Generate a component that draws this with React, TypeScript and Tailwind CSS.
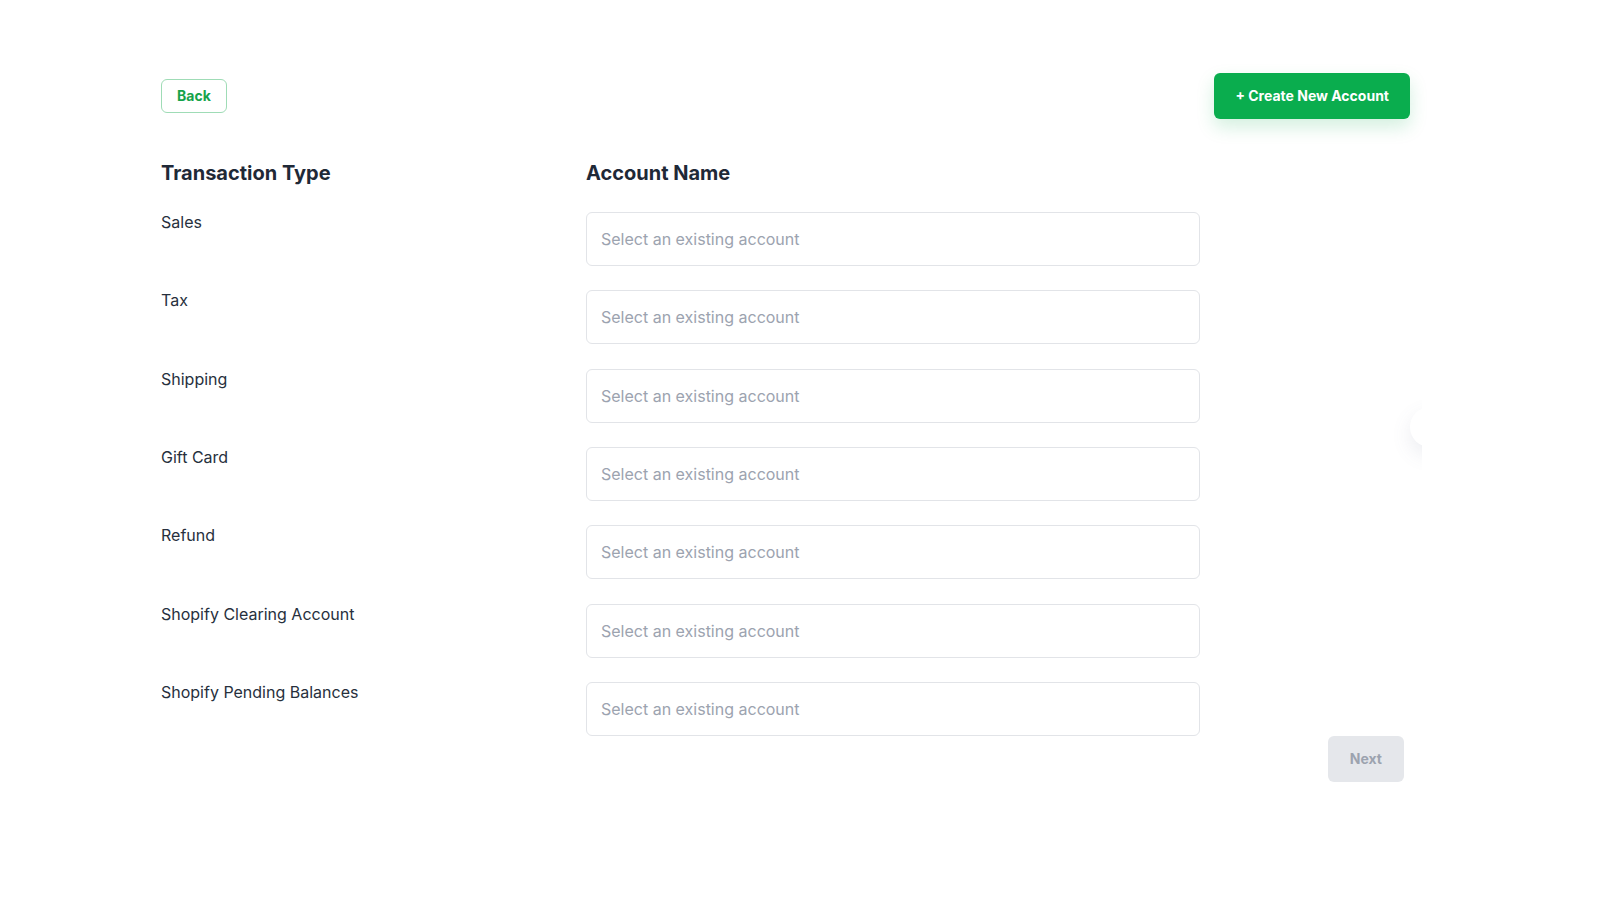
import React from 'react';

const ROWS = [
  'Sales',
  'Tax',
  'Shipping',
  'Gift Card',
  'Refund',
  'Shopify Clearing Account',
  'Shopify Pending Balances',
];

export default function App() {
  return (
    <div
      className="relative min-h-[900px] w-full bg-white"
      style={{ fontFamily: 'Inter, "Noto Sans", sans-serif' }}
    >
      <div className="ml-[161px] w-[1249px] pt-[73px]">
        <div className="flex items-center justify-between">
          <button className="h-[34px] rounded-md border border-[#9fdcb6] px-[15px] text-sm font-bold text-[#16a34a]">
            Back
          </button>
          <button className="h-[46px] rounded-md bg-[#0aad4e] px-[21px] text-sm font-bold text-white shadow-[0_8px_18px_rgba(10,173,78,0.18)]">
            + Create New Account
          </button>
        </div>

        <div className="mt-[40px] flex">
          <h2 className="w-[425px] text-xl font-bold leading-7 text-[#1f2937]">Transaction Type</h2>
          <h2 className="text-xl font-bold leading-7 text-[#1f2937]">Account Name</h2>
        </div>

        <div className="mt-[25px] flex flex-col gap-[24.33px]">
          {ROWS.map((label) => (
            <div key={label} className="flex items-start">
              <div className="-mt-[2px] w-[425px] text-base leading-6 text-[#27303d]">{label}</div>
              <div className="flex h-[54px] w-[614px] items-center rounded-md border border-[#e2e4e8] px-[14px] text-base text-[#9ca3af]">
                Select an existing account
              </div>
            </div>
          ))}
        </div>

        <div className="flex justify-end pr-[6px]">
          <button className="h-[46px] rounded-md bg-[#e5e7eb] px-[22px] text-sm font-bold text-[#9ca3af]">
            Next
          </button>
        </div>
      </div>

      <div className="absolute left-[1370px] top-[395px] h-[90px] w-[52px] overflow-hidden">
        <div className="ml-[40px] mt-[12px] h-10 w-10 rounded-full bg-white shadow-[0_8px_20px_rgba(100,110,140,0.12)]" />
      </div>
    </div>
  );
}
